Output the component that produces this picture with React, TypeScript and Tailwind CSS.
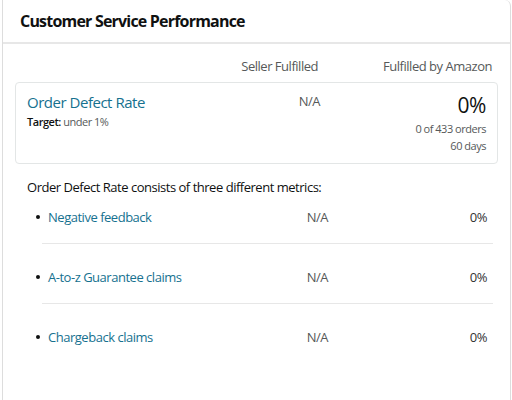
import React from "react";

const rows = [
  { name: "Negative feedback", first: true, last: false },
  { name: "A-to-z Guarantee claims", first: false, last: false },
  { name: "Chargeback claims", first: false, last: true },
];

export default function App() {
  return (
    <div
      className="w-[512px] h-[400px] bg-white overflow-hidden pl-[2px] pr-[1px] text-[#0f1111] tracking-[-0.03em]"
      style={{ fontFamily: '"Open Sans", "Noto Sans", Arial, sans-serif' }}
    >
      <div className="h-full border-l border-r border-[#dddddd] rounded-tr-[6px]">
        <div className="h-[44px] border-b-2 border-[#e7e7e7] px-[17px] flex items-center">
          <h2 className="text-[16px] leading-[24px] font-bold text-[#0f1111] tracking-[-0.05em]">
            Customer Service Performance
          </h2>
        </div>

        <div className="px-[12px] pt-[13px]">
          <div className="flex justify-end pr-[6px] text-[13px] leading-[18px] text-[#565959]">
            <div className="text-right">Seller Fulfilled</div>
            <div className="w-[174px] text-right">Fulfilled by Amazon</div>
          </div>

          <div className="mt-[7px] border border-[#e3e6e6] rounded-[4px] pl-[11px] pr-[11px] pt-[9px] pb-[9px] flex items-start">
            <div className="flex-1">
              <div className="text-[15px] leading-[20px] text-[#16718f]">Order Defect Rate</div>
              <div className="mt-[2px] text-[11px] leading-[16px] text-[#565959]">
                <span className="font-semibold text-[#0f1111]">Target:</span> under 1%
              </div>
            </div>
            <div className="text-[13px] leading-[18px] text-[#565959] text-right">N/A</div>
            <div className="w-[166px] text-right">
              <div className="text-[21px] leading-[28px] text-[#0f1111] -mt-[1px]">0%</div>
              <div className="mt-[1px] text-[11px] leading-[17px] text-[#565959]">0 of 433 orders</div>
              <div className="text-[11px] leading-[17px] text-[#565959]">60 days</div>
            </div>
          </div>

          <div className="mt-[14px] pl-[12px] text-[13px] leading-[18px] text-[#0f1111]">
            Order Defect Rate consists of three different metrics:
          </div>

          <div className="ml-[27px] mr-[5px]">
            {rows.map((r) => (
              <div
                key={r.name}
                className={`flex items-center pb-[17px] ${r.last ? "" : "border-b border-[#e7e7e7]"} ${r.first ? "pt-[12px]" : "pt-[24px]"}`}
              >
                <span className="-ml-[6px] mr-[8px] w-[4px] h-[4px] rounded-full bg-[#0f1111]" />
                <div className="flex-1 text-[13px] leading-[18px] text-[#16718f]">{r.name}</div>
                <div className="text-[13px] leading-[18px] text-[#565959] text-right">N/A</div>
                <div className="w-[165px] pr-[6px] text-[13px] leading-[18px] text-[#333333] text-right">
                  0%
                </div>
              </div>
            ))}
          </div>
        </div>
      </div>
    </div>
  );
}
